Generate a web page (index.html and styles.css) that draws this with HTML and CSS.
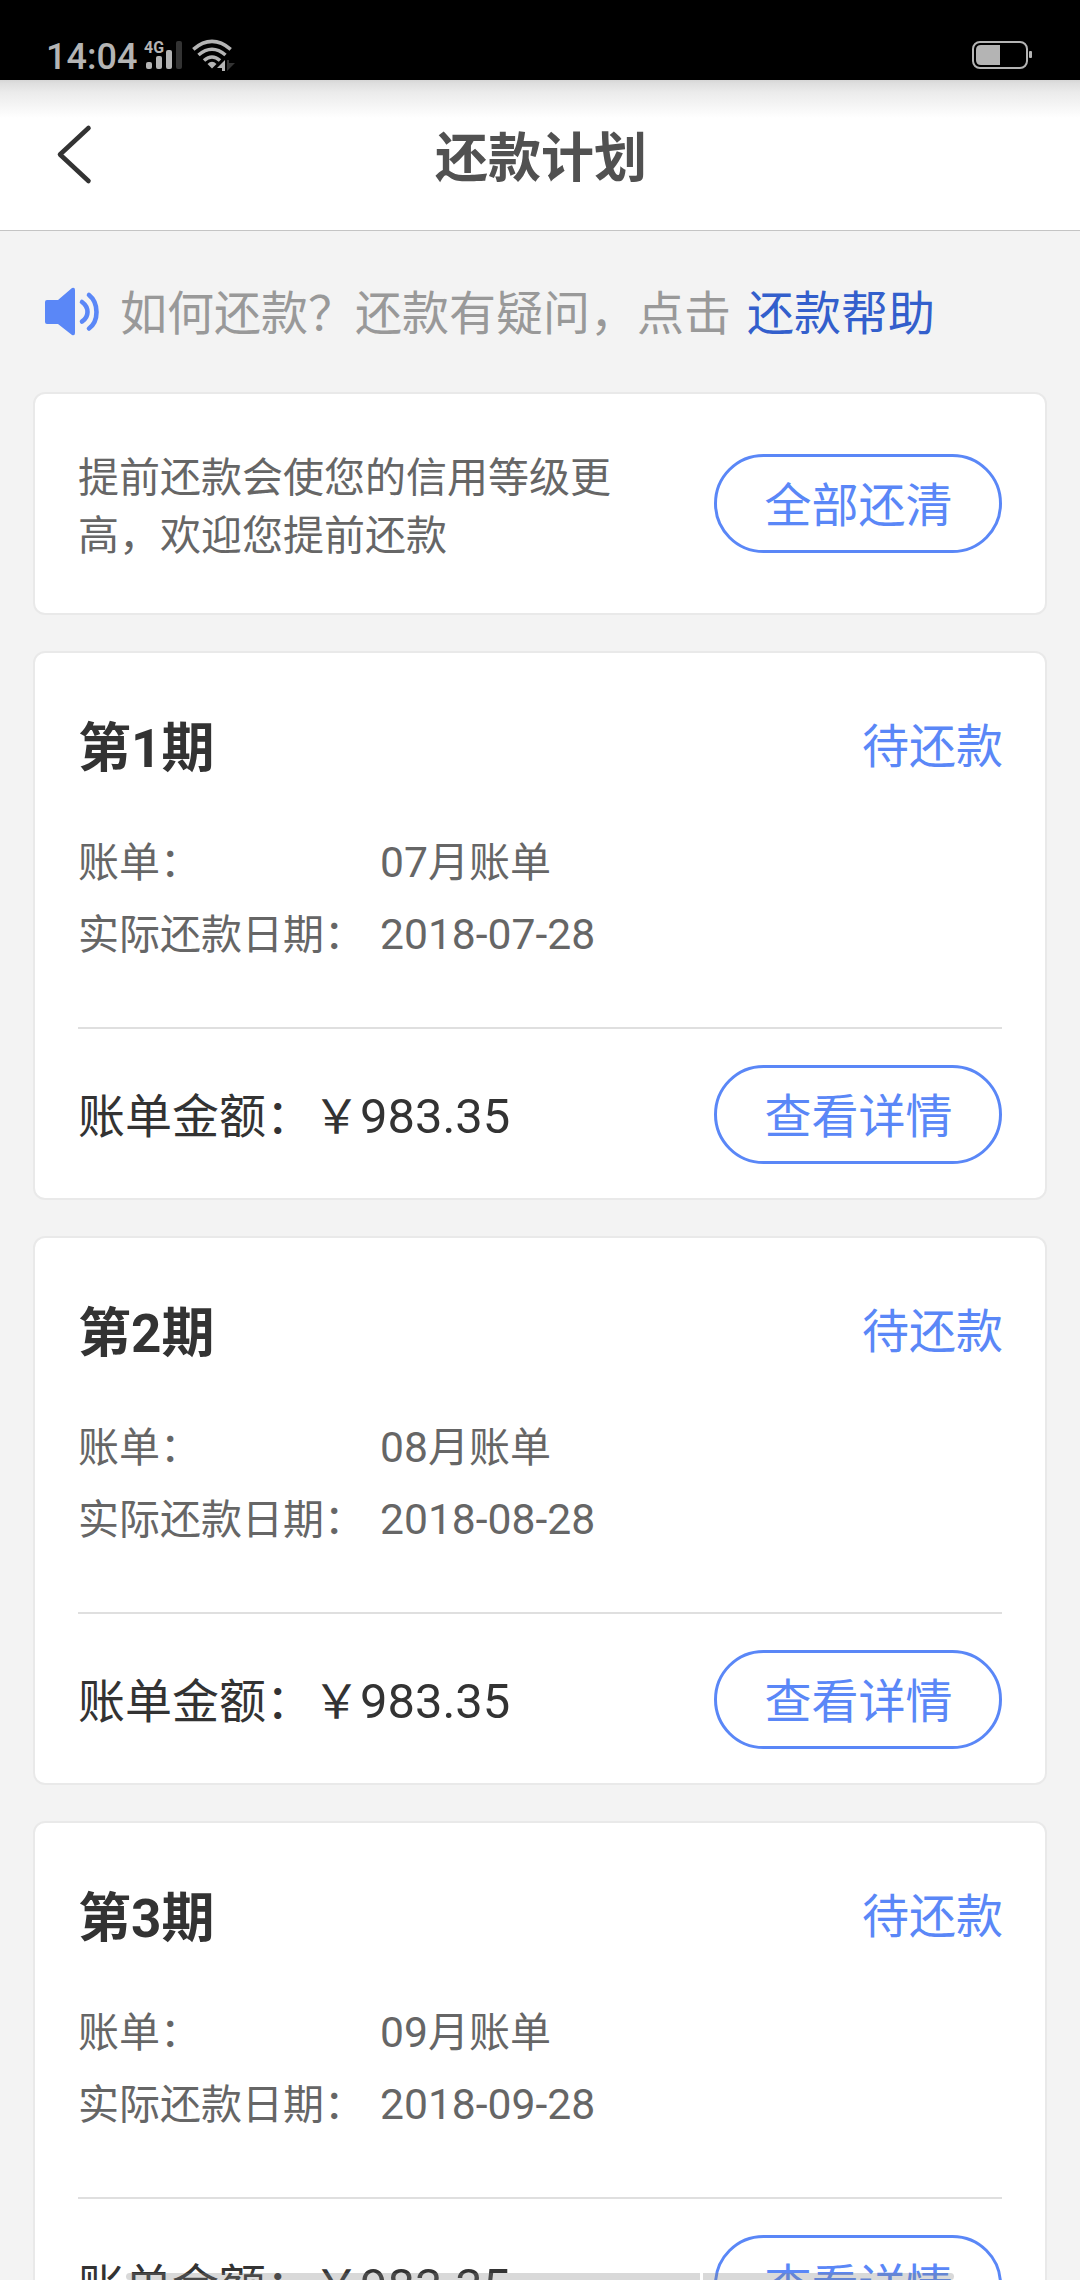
FILE: index.html
```html
<!DOCTYPE html>
<html lang="zh-CN">
<head>
<meta charset="utf-8">
<title>还款计划</title>
<link rel="stylesheet" href="styles.css">
</head>
<body>
<div class="screen">
  <div class="statusbar">
    <span class="time">14:04</span>
    <svg class="signal" width="40" height="34" viewBox="0 0 40 34">
      <text class="net" x="0" y="13.5" textLength="20" lengthAdjust="spacingAndGlyphs">4G</text>
      <g fill="#b4b4b4"><rect x="2" y="23" width="6" height="7" rx="2"/><rect x="12" y="17" width="6" height="13" rx="2"/><rect x="22" y="11" width="6" height="19" rx="2"/></g>
      <rect x="32" y="2" width="6" height="28" rx="2" fill="#333"/>
    </svg>
    <svg class="wifi" width="44" height="34" viewBox="0 0 44 34">
      <g fill="none" stroke="#b4b4b4" stroke-width="3.6">
        <path d="M1.3 10.3Q20 -5.5 38.700 10.300"/>
        <path d="M6.500 16Q20 4.500 33.500 16"/>
        <path d="M12 21.500Q20 14.500 28 21.500"/>
      </g>
      <path d="M15.500 25Q20 20.500 24.500 25L20 29.500Z" fill="#b4b4b4"/>
      <path d="M33 21V32H30V29H25Z" fill="#b4b4b4"/>
      <path d="M35 21H37V24H43L35 32Z" fill="#333"/>
    </svg>
    <svg class="battery" width="62" height="30" viewBox="0 0 62 30">
      <rect x="1" y="2" width="54" height="26" rx="7" fill="none" stroke="#b4b4b4" stroke-width="2"/>
      <path d="M9 5H28V25H9Q4 25 4 20V10Q4 5 9 5Z" fill="#b4b4b4"/>
      <rect x="57" y="11" width="3" height="7" rx="1" fill="#b4b4b4"/>
    </svg>
  </div>
  <header class="navbar">
    <svg class="back" width="40" height="64" viewBox="0 0 40 64"><path d="M33.500 5L5 31.500L33.500 58" fill="none" stroke="#333" stroke-width="4.600" stroke-linecap="round" stroke-linejoin="round"/></svg>
    <h1 class="title">还款计划</h1>
  </header>
  <div class="notice">
    <svg class="horn" width="56" height="50" viewBox="0 0 56 50">
      <path d="M3 13H14L28 1Q31 0 31 3V46Q31 49 28 48L14 37H3Q1 37 1 35V15Q1 13 3 13Z" fill="#5a87f7"/>
      <path d="M38 15Q43.500 19 43.500 25T38 34.500M45 8Q52.500 14 52.500 25T45 41.500" fill="none" stroke="#5a87f7" stroke-width="4.600" stroke-linecap="round"/>
    </svg>
    <span class="ask">如何还款？还款有疑问，点击</span><a class="ask help">还款帮助</a>
  </div>
  <main class="cards">
    <section class="card promo">
      <p class="promo-text">提前还款会使您的信用等级更高，欢迎您提前还款</p>
      <button class="btn">全部还清</button>
    </section>
    <section class="card bill">
      <div class="head"><h2>第1期</h2><span class="state">待还款</span></div>
      <dl class="info"><dt>账单：</dt><dd><span class="num">07</span>月账单</dd><dt>实际还款日期：</dt><dd><span class="num">2018-07-28</span></dd></dl>
      <div class="foot"><span class="sum">账单金额：￥<span class="num">983.35</span></span><button class="btn">查看详情</button></div>
    </section>
    <section class="card bill">
      <div class="head"><h2>第2期</h2><span class="state">待还款</span></div>
      <dl class="info"><dt>账单：</dt><dd><span class="num">08</span>月账单</dd><dt>实际还款日期：</dt><dd><span class="num">2018-08-28</span></dd></dl>
      <div class="foot"><span class="sum">账单金额：￥<span class="num">983.35</span></span><button class="btn">查看详情</button></div>
    </section>
    <section class="card bill">
      <div class="head"><h2>第3期</h2><span class="state">待还款</span></div>
      <dl class="info"><dt>账单：</dt><dd><span class="num">09</span>月账单</dd><dt>实际还款日期：</dt><dd><span class="num">2018-09-28</span></dd></dl>
      <div class="foot"><span class="sum">账单金额：￥<span class="num">983.35</span></span><button class="btn">查看详情</button></div>
    </section>
  </main>
  <div class="gesture"><i class="g1"></i><i class="g2"></i></div>
</div>
</body>
</html>
```
FILE: styles.css
```css
* { box-sizing: border-box; margin: 0; padding: 0; }
body { background: #f3f3f3; font-family: Roboto, "Noto Sans CJK SC", sans-serif; color: #333; }
.screen { position: relative; width: 1080px; height: 2280px; overflow: hidden; background: #f3f3f3; }
.statusbar { height: 80px; background: #000; color: #b4b4b4; display: flex; align-items: flex-start; padding: 39px 46px 0 46px; }
.time { font-size: 36px; line-height: 36px; font-weight: 500; width: 98px; }
.net { font: 700 16px Roboto, sans-serif; fill: #b4b4b4; }
.wifi { margin-left: 8px; }
.battery { margin-left: auto; margin-top: 1px; }
.navbar { height: 151px; padding: 0 51px 0 55px; border-bottom: 1px solid #c4c4c4; display: grid; grid-template-columns: 40px 1fr 44px; align-items: center; background: linear-gradient(#d6d6d6 0, #dedede 3px, #ebebeb 12px, #f4f4f4 24px, #fff 38px, #fff 100%); }
.title { font-size: 53px; line-height: 76px; padding-top: 7px; padding-left: 2px; font-weight: 700; color: #515151; text-align: center; }
.notice { height: 161px; padding: 0 44px; display: flex; align-items: center; font-size: 47px; line-height: 70px; color: #999; }
.horn { margin-right: 20px; }
.ask { padding-top: 5px; }
.help { margin-left: 16px; color: #335fcc; }
.cards { display: flex; flex-direction: column; gap: 36px; padding: 0 33px; }
.card { border: 2px solid #e9e9e9; border-radius: 12px; background: #fff; padding: 0 43px; flex: none; }
.promo { height: 223px; display: flex; justify-content: space-between; align-items: center; }
.promo-text { width: 540px; padding-top: 6px; font-size: 41px; line-height: 58px; color: #666; }
.btn { width: 288px; height: 99px; padding: 4px 0 0 1px; border: 3px solid #5a87f7; border-radius: 50px; background: none; color: #5a87f7; font: 47px/70px Roboto, "Noto Sans CJK SC", sans-serif; }
.bill { height: 549px; }
.head { display: flex; justify-content: space-between; align-items: center; height: 80px; margin-top: 54px; }
h2 { font-size: 53px; line-height: 80px; padding-top: 4px; font-weight: 700; }
.state { font-size: 47px; line-height: 70px; margin-right: -1px; color: #5a87f7; }
.info { display: grid; grid-template-columns: 302px 1fr; grid-auto-rows: 72px; line-height: 72px; font-size: 41px; color: #666; margin-top: 40px; height: 202px; border-bottom: 2px solid #dfdfdf; }
.num { font-size: 1.04em; line-height: 1; }
.foot { display: flex; justify-content: space-between; align-items: center; height: 171px; }
.sum { font-size: 47px; line-height: 70px; padding-top: 4px; }
.gesture { position: absolute; left: 126px; bottom: 0; width: 828px; height: 7px; display: flex; gap: 3px; }
.gesture i { background: rgba(128, 128, 128, .3); height: 7px; }
.g1 { width: 574px; border-radius: 4px 0 0 4px; }
.g2 { width: 251px; border-radius: 0 4px 4px 0; }
```
